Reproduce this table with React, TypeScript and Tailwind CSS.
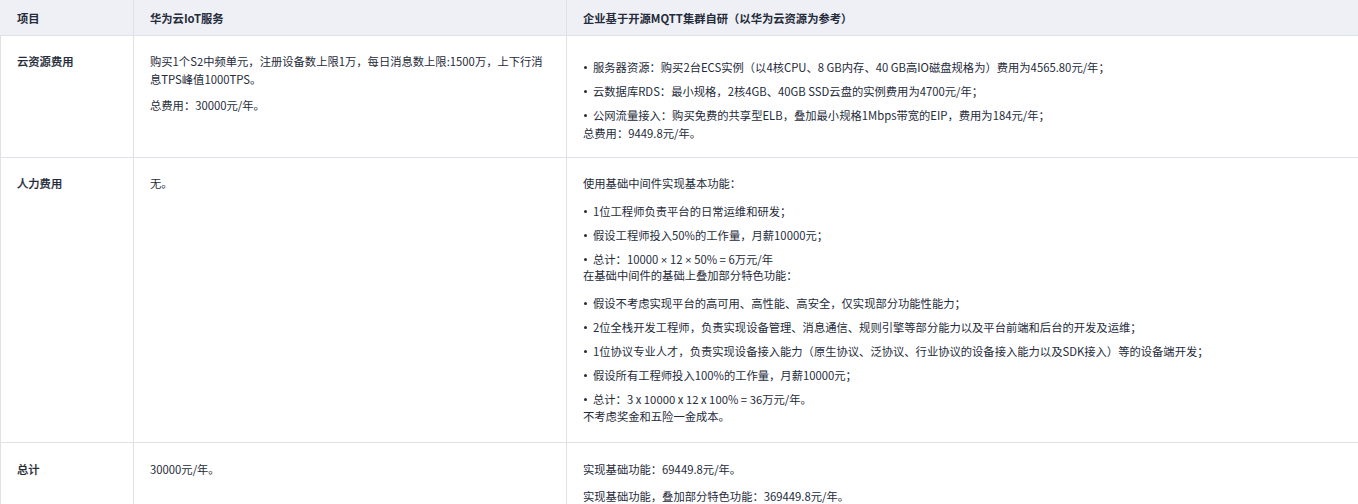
import React from 'react';

const font = { fontFamily: '"Noto Sans CJK SC", "Noto Sans", sans-serif' };

const Bullet: React.FC<{ children: React.ReactNode }> = ({ children }) => (
  <li className="pt-[6px] flex">
    <span className="w-[10px] h-[18px] shrink-0 flex items-center pl-[1px]">
      <span className="w-[3px] h-[3px] rounded-full bg-[#252b3a]" />
    </span>
    <span>{children}</span>
  </li>
);

const Cell: React.FC<{ children?: React.ReactNode; className?: string }> = ({ children, className = '' }) => (
  <div className={`border-l border-[#dfe1e6] px-4 pt-4 pb-4 ${className}`}>{children}</div>
);

const Times = () => <span className="[font-family:'Liberation_Sans',sans-serif]">×</span>;

const label = 'font-medium [-webkit-text-stroke:0.2px_#252b3a]';

export default function App() {
  return (
    <div className="w-full min-h-screen overflow-hidden bg-white" style={font}>
      <div className="w-[1420px] text-[11.3px] leading-[18px] text-[#252b3a]">
        {/* header */}
        <div className="grid grid-cols-[133px_433px_1fr] bg-[#eef0f5] border-b border-[#dfe1e6] font-bold">
          <div className="h-[35px] flex items-center px-[17px]">项目</div>
          <div className="h-[35px] flex items-center border-l border-[#dfe1e6] px-4">华为云IoT服务</div>
          <div className="h-[35px] flex items-center border-l border-[#dfe1e6] px-4">企业基于开源MQTT集群自研（以华为云资源为参考）</div>
        </div>

        {/* cloud resources */}
        <div className="grid grid-cols-[133px_433px_1fr] border-b border-[#dfe1e6]">
          <Cell className={label}>云资源费用</Cell>
          <Cell>
            <p>购买1个S2中频单元，注册设备数上限1万，每日消息数上限:1500万，上下行消息TPS峰值1000TPS。</p>
            <p className="pt-2">总费用：30000元/年。</p>
          </Cell>
          <Cell className="pb-[15px]">
            <ul>
              <Bullet>服务器资源：购买2台ECS实例（以4核CPU、8 GB内存、40 GB高IO磁盘规格为）费用为4565.80元/年；</Bullet>
              <Bullet>云数据库RDS：最小规格，2核4GB、40GB SSD云盘的实例费用为4700元/年；</Bullet>
              <Bullet>公网流量接入：购买免费的共享型ELB，叠加最小规格1Mbps带宽的EIP，费用为184元/年；</Bullet>
            </ul>
            <p>总费用：9449.8元/年。</p>
          </Cell>
        </div>

        {/* labour */}
        <div className="grid grid-cols-[133px_433px_1fr] border-b border-[#dfe1e6]">
          <Cell className={label}>人力费用</Cell>
          <Cell>无。</Cell>
          <Cell className="pb-[17px]">
            <p>使用基础中间件实现基本功能：</p>
            <ul className="pt-1">
              <Bullet>1位工程师负责平台的日常运维和研发；</Bullet>
              <Bullet>假设工程师投入50%的工作量，月薪10000元；</Bullet>
              <Bullet>总计：10000 <Times /> 12 <Times /> 50% = 6万元/年</Bullet>
            </ul>
            <p className="-mt-[3px]">在基础中间件的基础上叠加部分特色功能：</p>
            <ul className="pt-1">
              <Bullet>假设不考虑实现平台的高可用、高性能、高安全，仅实现部分功能性能力；</Bullet>
              <Bullet>2位全栈开发工程师，负责实现设备管理、消息通信、规则引擎等部分能力以及平台前端和后台的开发及运维；</Bullet>
              <Bullet>1位协议专业人才，负责实现设备接入能力（原生协议、泛协议、行业协议的设备接入能力以及SDK接入）等的设备端开发；</Bullet>
              <Bullet>假设所有工程师投入100%的工作量，月薪10000元；</Bullet>
              <Bullet>总计：3 x 10000 x 12 x 100% = 36万元/年。</Bullet>
            </ul>
            <p className="-mt-[1px]">不考虑奖金和五险一金成本。</p>
          </Cell>
        </div>

        {/* total */}
        <div className="grid grid-cols-[133px_433px_1fr] border-b border-[#dfe1e6]">
          <Cell className={`pt-[17px] ${label}`}>总计</Cell>
          <Cell className="pt-[17px]">30000元/年。</Cell>
          <Cell className="pt-[17px]">
            <p>实现基础功能：69449.8元/年。</p>
            <p className="pt-[9px]">实现基础功能，叠加部分特色功能：369449.8元/年。</p>
          </Cell>
        </div>
      </div>
    </div>
  );
}
